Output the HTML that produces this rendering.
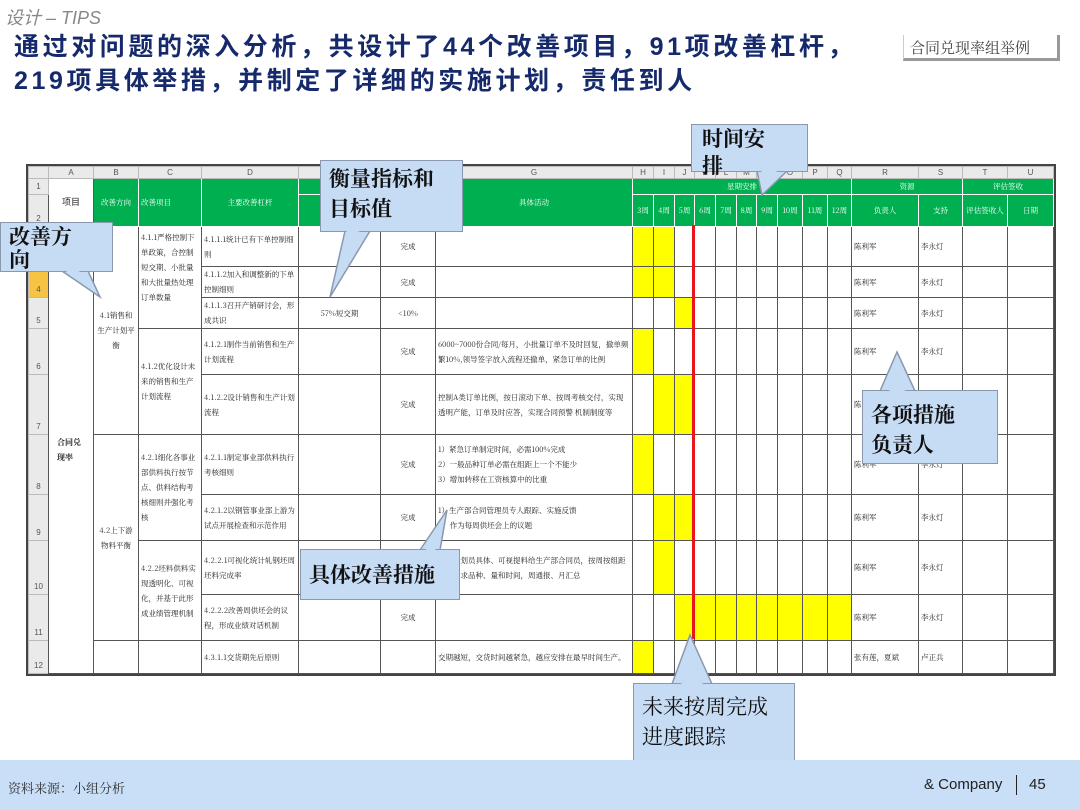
<!DOCTYPE html>
<html><head><meta charset="utf-8">
<style>
*{margin:0;padding:0;box-sizing:border-box}
body{width:1080px;height:810px;background:#fff;position:relative;overflow:hidden;font-family:"Liberation Sans","Noto Sans CJK SC",sans-serif}
.abs{position:absolute}
table{position:absolute;left:28px;top:166px;border-collapse:collapse;table-layout:fixed;width:1025px;font-family:"Noto Serif CJK SC","Liberation Serif",serif;font-size:7.5px;color:#222;outline:2px solid #444}
td{border:1px solid #555;padding:0 2px;line-height:15px;overflow:hidden;vertical-align:middle}
tr.h td{background:#eaeaea;color:#555;text-align:center;font-family:"Liberation Sans",sans-serif;font-size:8px;line-height:10px;border-color:#bbb}
td.n{background:#eaeaea;color:#555;text-align:center;font-family:"Liberation Sans",sans-serif;font-size:8px;vertical-align:bottom;border-color:#bbb}
td.g{background:#00b050;color:#fff;text-align:center;border-color:#fff}
td.y{background:#ffff00}
td.c{text-align:center}
.call{position:absolute;background:#c6dcf5;border:1.5px solid #8a98ad;font-family:"Noto Serif CJK SC","Noto Sans CJK SC",serif;font-weight:bold;font-size:21px;color:#111;line-height:30px;padding:2px 8px}
</style></head><body>
<div class="abs" style="left:5px;top:4px;font-size:18px;font-style:italic;color:#888">设计 – TIPS</div>
<div class="abs" style="left:14px;top:30px;font-size:25px;letter-spacing:3.6px;font-weight:bold;color:#15296b;line-height:34px;font-family:'Liberation Sans','Noto Sans CJK SC',sans-serif;white-space:nowrap">通过对问题的深入分析，共设计了44个改善项目，91项改善杠杆，<br>219项具体举措，并制定了详细的实施计划，责任到人</div>
<div class="abs" style="left:903px;top:35px;width:157px;height:26px;border-left:1px solid #ccc;border-right:3px solid #999;border-bottom:3px solid #999;font-size:15px;color:#444;padding:2px 6px;font-family:'Noto Serif CJK SC',serif">合同兑现率组举例</div>

<table>
<colgroup><col style="width:20px"><col style="width:45px"><col style="width:45px"><col style="width:63px"><col style="width:97px"><col style="width:82px"><col style="width:55px"><col style="width:197px">
<col style="width:21px"><col style="width:21px"><col style="width:20px"><col style="width:21px"><col style="width:21px"><col style="width:20px"><col style="width:21px"><col style="width:25px"><col style="width:25px"><col style="width:24px">
<col style="width:67px"><col style="width:44px"><col style="width:45px"><col style="width:46px"></colgroup>
<tr class="h" style="height:12px"><td></td><td>A</td><td>B</td><td>C</td><td>D</td><td>E</td><td>F</td><td>G</td><td>H</td><td>I</td><td>J</td><td>K</td><td>L</td><td>M</td><td>N</td><td>O</td><td>P</td><td>Q</td><td>R</td><td>S</td><td>T</td><td>U</td></tr>
<tr style="height:15px"><td class="n">1</td><td rowspan="2" class="c" style="font-family:'Liberation Sans','Noto Sans CJK SC',sans-serif;font-size:9px">项目</td><td rowspan="2" class="g">改善方向</td><td rowspan="2" class="g" style="text-align:left">改善项目</td><td rowspan="2" class="g">主要改善杠杆</td><td colspan="2" class="g"></td><td rowspan="2" class="g">具体活动</td><td colspan="10" class="g">星期安排</td><td colspan="2" class="g">资源</td><td colspan="2" class="g">评估签收</td></tr>
<tr style="height:32px"><td class="n">2</td><td class="g"></td><td class="g"></td><td class="g">3周</td><td class="g">4周</td><td class="g">5周</td><td class="g">6周</td><td class="g">7周</td><td class="g">8周</td><td class="g">9周</td><td class="g">10周</td><td class="g">11周</td><td class="g">12周</td><td class="g">负责人</td><td class="g">支持</td><td class="g" style="line-height:12px">评估签收人</td><td class="g">日期</td></tr>
<tr style="height:40px"><td class="n">3</td><td rowspan="10" style="vertical-align:middle;font-weight:bold;font-size:8px;padding:0 8px">合同兑现率</td><td rowspan="5" class="c">4.1销售和生产计划平衡</td><td rowspan="3" style="vertical-align:top;padding-top:3px">4.1.1严格控制下单政策，合控制短交期、小批量和大批量热处理订单数量</td><td>4.1.1.1统计已有下单控制细则</td><td></td><td class="c">完成</td><td></td><td class="y"></td><td class="y"></td><td></td><td></td><td></td><td></td><td></td><td></td><td></td><td></td><td>陈利军</td><td>李永灯</td><td></td><td></td></tr>
<tr style="height:31px"><td class="n" style="background:#f6c342">4</td><td>4.1.1.2加入和调整新的下单控制细则</td><td></td><td class="c">完成</td><td></td><td class="y"></td><td class="y"></td><td></td><td></td><td></td><td></td><td></td><td></td><td></td><td></td><td>陈利军</td><td>李永灯</td><td></td><td></td></tr>
<tr style="height:31px"><td class="n">5</td><td>4.1.1.3召开产销研讨会，形成共识</td><td class="c">57%短交期</td><td class="c">&lt;10%</td><td></td><td></td><td></td><td class="y"></td><td></td><td></td><td></td><td></td><td></td><td></td><td></td><td>陈利军</td><td>李永灯</td><td></td><td></td></tr>
<tr style="height:46px"><td class="n">6</td><td rowspan="2">4.1.2优化设计未来的销售和生产计划流程</td><td>4.1.2.1制作当前销售和生产计划流程</td><td></td><td class="c">完成</td><td>6000~7000份合同/每月，小批量订单不及时回复，撤单频繁10%,领导签字放入流程还撤单，紧急订单的比例</td><td class="y"></td><td></td><td></td><td></td><td></td><td></td><td></td><td></td><td></td><td></td><td>陈利军</td><td>李永灯</td><td></td><td></td></tr>
<tr style="height:60px"><td class="n">7</td><td>4.1.2.2设计销售和生产计划流程</td><td></td><td class="c">完成</td><td>控制A类订单比例，按日滚动下单、按周考核交付，实现透明产能，订单及时应答，实现合同预警 机制制度等</td><td></td><td class="y"></td><td class="y"></td><td></td><td></td><td></td><td></td><td></td><td></td><td></td><td>陈</td><td></td><td></td><td></td></tr>
<tr style="height:60px"><td class="n">8</td><td rowspan="4" class="c">4.2上下游物料平衡</td><td rowspan="2">4.2.1细化各事业部供料执行按节点、供料结构考核细则并强化考核</td><td>4.2.1.1制定事业部供料执行考核细则</td><td></td><td class="c">完成</td><td>1）紧急订单制定时间，必需100%完成<br>2）一般品种订单必需在组距上一个不能少<br>3）增加转移在工资核算中的比重</td><td class="y"></td><td></td><td></td><td></td><td></td><td></td><td></td><td></td><td></td><td></td><td>陈利军</td><td>李永灯</td><td></td><td></td></tr>
<tr style="height:46px"><td class="n">9</td><td>4.2.1.2以钢管事业部上游为试点开展检查和示范作用</td><td></td><td class="c">完成</td><td>1）生产部合同管理员专人跟踪、实施反馈<br>2）作为每周供坯会上的议题</td><td></td><td class="y"></td><td class="y"></td><td></td><td></td><td></td><td></td><td></td><td></td><td></td><td>陈利军</td><td>李永灯</td><td></td><td></td></tr>
<tr style="height:54px"><td class="n">10</td><td rowspan="2">4.2.2坯料供料实现透明化、可视化，并基于此形成业绩管理机制</td><td>4.2.2.1可视化统计轧钢坯周坯料完成率</td><td></td><td></td><td>细部计划员具体、可视提料给生产部合同员，按周按组距确定需求品种、量和时间，周通报、月汇总</td><td></td><td class="y"></td><td></td><td></td><td></td><td></td><td></td><td></td><td></td><td></td><td>陈利军</td><td>李永灯</td><td></td><td></td></tr>
<tr style="height:46px"><td class="n">11</td><td>4.2.2.2改善周供坯会的议程，形成业绩对话机制</td><td></td><td class="c">完成</td><td></td><td></td><td></td><td class="y"></td><td class="y"></td><td class="y"></td><td class="y"></td><td class="y"></td><td class="y"></td><td class="y"></td><td class="y"></td><td>陈利军</td><td>李永灯</td><td></td><td></td></tr>
<tr style="height:33px"><td class="n">12</td><td></td><td></td><td>4.3.1.1交货期先后原则</td><td></td><td></td><td>交期越短，交货时间越紧急，越应安排在最早时间生产。</td><td class="y"></td><td></td><td></td><td></td><td></td><td></td><td></td><td></td><td></td><td></td><td>张有莲，夏斌</td><td>卢正兵</td><td></td><td></td></tr>
</table>
<div class="abs" style="left:692px;top:225px;width:3px;height:414px;background:#e8161b"></div>

<svg class="abs" style="left:0;top:0" width="1080" height="810">
<g fill="#c6dcf5" stroke="#8a98ad" stroke-width="1.5">
<polygon points="345,231 330,297 370,231"/>
<polygon points="62,271 100,297 88,271"/>
<polygon points="757,171 762,195 787,171"/>
<polygon points="880,391 897,352 915,391"/>
<polygon points="420,550 447,510 440,550"/>
<polygon points="672,684 690,635 712,684"/>
</g></svg>
<div class="call" style="left:320px;top:160px;width:143px;height:72px">衡量指标和<br>目标值</div>
<div class="call" style="left:0;top:222px;width:113px;height:50px;line-height:23px;padding-top:2px">改善方<br>向</div>
<div class="call" style="left:691px;top:124px;width:117px;height:48px;line-height:27px;padding:0 10px">时间安<br>排</div>
<div class="call" style="left:862px;top:390px;width:136px;height:74px;padding-top:8px">各项措施<br>负责人</div>
<div class="call" style="left:300px;top:549px;width:160px;height:51px;padding-top:9px">具体改善措施</div>
<div class="call" style="left:633px;top:683px;width:162px;height:79px;padding-top:7px;font-weight:normal">未来按周完成<br>进度跟踪</div>
<svg class="abs" style="left:0;top:0" width="1080" height="810"><g fill="#c6dcf5"><polygon points="347,229 368,229 346,235"/><polygon points="64,269 86,269 70,275"/><polygon points="759,169 785,169 765,175"/><polygon points="882,393 913,393 897,388"/><polygon points="422,552 438,552 432,546"/><polygon points="674,686 710,686 692,680"/></g></svg>

<div class="abs" style="left:0;top:760px;width:1080px;height:50px;background:#c9def7"></div>
<div class="abs" style="left:8px;top:778px;font-size:13px;color:#333;font-family:'Noto Serif CJK SC',serif">资料来源：小组分析</div>
<div class="abs" style="left:924px;top:776px;font-size:15px;color:#222">&amp; Company</div>
<div class="abs" style="left:1016px;top:775px;width:1px;height:20px;background:#222"></div>
<div class="abs" style="left:1029px;top:776px;font-size:15px;color:#222">45</div>
</body></html>
